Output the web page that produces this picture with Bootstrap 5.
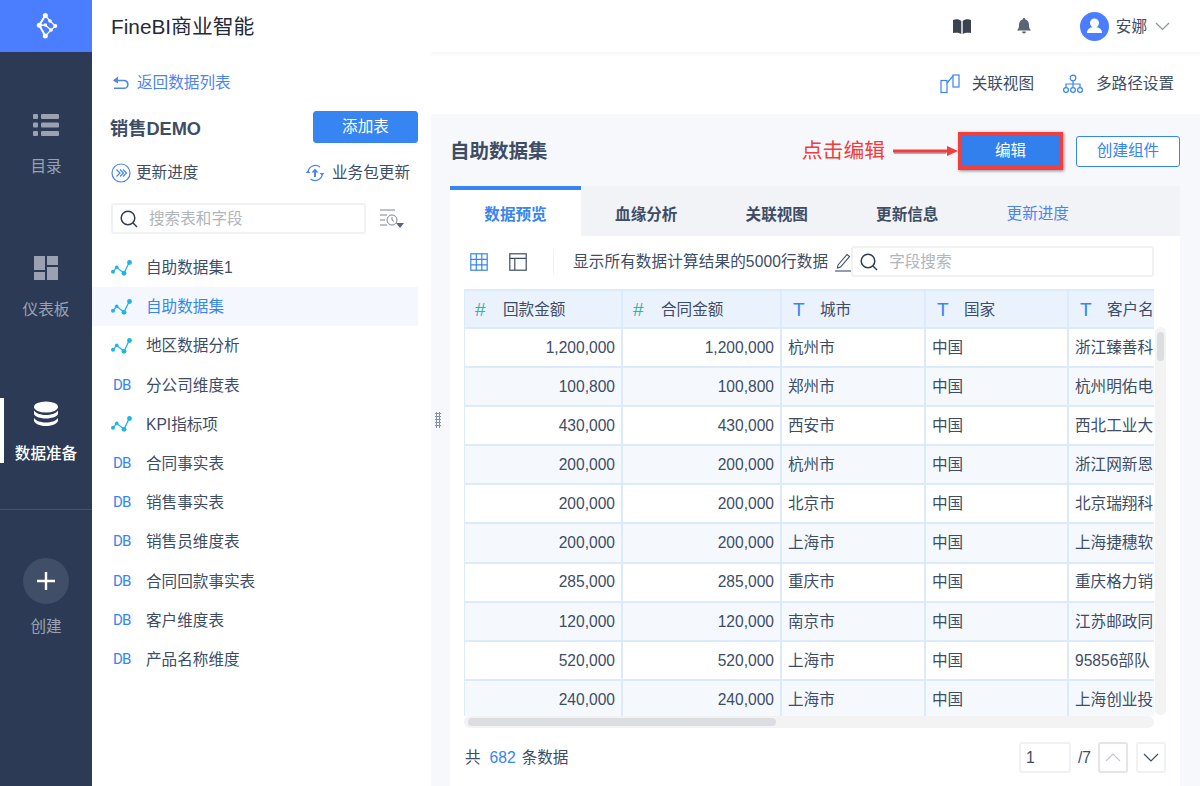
<!DOCTYPE html>
<html lang="zh-CN">
<head>
<meta charset="utf-8">
<title>FineBI</title>
<link href="https://cdn.jsdelivr.net/npm/bootstrap@5.3.0/dist/css/bootstrap.min.css" rel="stylesheet">
<style>
html,body{height:786px;overflow:hidden}
body{font-family:"Liberation Sans","Noto Sans CJK SC",sans-serif;font-size:15.6px;color:#3d4d66;background:#fff}
.shell{width:1200px;height:786px}
.rail{width:92px;background:#2c3a55;color:#9aa2b1;flex:none}
.rail-logo{height:52px;background:#4a7dff}
.rail-item{height:143px;padding-top:61px;font-size:15.6px;line-height:22px;position:relative;text-align:center}
.rail-item svg{display:block;margin:0 auto 19px}
.rail-on{color:#fff;padding-top:63px;height:171px;font-weight:500}
.rail-on svg{margin-bottom:16px}
.rail-on::before{content:"";position:absolute;left:0;top:60px;width:4px;height:65px;background:#fff}
.rail-line{border-top:1px solid #47536c}
.rail-add{width:46px;height:46px;border-radius:50%;background:#414e68;margin:48px auto 11px}
.topbar{height:52px;background:#fff;padding:0 30px 0 19px;position:relative;z-index:2;color:#3d4d66}
.brand{font-size:20.8px;color:#232b38;padding-top:2px}
.topshadow{box-shadow:inset 0 6px 5px -5px rgba(60,70,90,.08)}
.panel{width:339px;background:#fff;flex:none;padding:0 13px 0 0;position:relative;z-index:3}
.back{color:#4a85f0;margin:20px 0 0 20px;height:22px;line-height:22px}
.pk-row{margin:17px 0 0 18px;height:32px}
.pk-name{font-size:18.2px;font-weight:700;color:#3d4d66;padding-top:6px}
.btn-add{width:105px;height:32px;padding:0;background:#3685f2;border:1px solid #3685f2;color:#fff;border-radius:3px;font-size:15.6px}
.act-row{margin:15px 8px 0 19px;height:30px}
.search-row{margin:15px 0 0 19px;height:31px}
.sbox{border:2px solid #f0f1f4;border-radius:3px;height:31px;background:#fff;color:#b0b4bd}
.sbox svg{margin:0 11px 0 7px}
.sbox-l{width:255px}
.datalist{margin-top:14px;padding:0}
.datalist .list-group-item{border:0;padding:0 0 0 19px;height:39.2px;line-height:39px;color:#3d4d66;background:transparent;font-size:15.6px;display:flex;align-items:center;border-radius:0}
.datalist .list-group-item.active{background:#f4f8fe;color:#3685f2;margin:0}
.li-ic{width:35px;flex:none;display:flex}
.db{font-size:15px;font-weight:400;letter-spacing:-.8px;color:#3685f2;font-family:Roboto,sans-serif;width:35px;flex:none;padding-left:2px}
.right{background:#fff;min-width:0}
.subbar{height:62px;padding:2px 26px 0 0;color:#3d4d66;background:#fff}
.content{background:#f7f8fb;padding:0 20px 0 19px;position:relative}
.handle{position:absolute;left:4px;top:298px;width:6px;height:16px;background-image:radial-gradient(#8a93a3 1px,transparent 1.2px);background-size:3px 3px}
.headrow{height:72px;padding-top:2px}
.h-title{font-size:19.5px;font-weight:700;color:#3d4d66;padding-top:2px}
.note{color:#f23b3b;font-size:20.8px;line-height:24px;text-shadow:0 0 2px #fff}
.btn-edit{width:105px;height:38px;background:#3280ee;color:#fff;border:4px solid #f23e3e;border-radius:0;padding:0;font-size:15.6px;box-shadow:1px 1px 3px rgba(0,0,0,.45)}
.btn-make{width:104px;height:31px;padding:0;border:1px solid #3685f2;color:#3685f2;background:#fff;border-radius:3px;font-size:15.6px;margin-left:13px}
.tabline{background:#f2f3f7;height:50px;display:flex}
.tabline .nav-link{width:130.5px;height:50px;padding:0;line-height:58px;text-align:center;font-weight:700;color:#3d4d66;font-size:15.6px;border:0;border-radius:0;background:transparent}
.tabline .nav-link.active{width:131px;background:#fff;color:#3685f2;border-top:4px solid #3685f2;line-height:50px}
.tabline .nav-link.plain{font-weight:400;color:#4a85f0;line-height:55px}
.tabbody{background:#fff;height:550px;padding:10px 14px 0}
.tools{height:31px;padding-left:6px}
.tool-txt{letter-spacing:.12px}
.divi{width:1px;height:26px;background:#f0f1f4;margin:0 19px 0 26px}
.sbox-r{width:303px;flex:none;margin-left:-1px}
.grid-wrap{margin-top:12px}
.tb-clip{width:690px;height:427px;overflow:hidden;flex:none}
.vbar{width:12px;height:388px;margin:38px 0 0 1px;background:#f3f3f4;border-radius:6px;padding:5px 2px 0}
.vbar i{display:block;height:29px;background:#dcdde1;border-radius:4px}
.hbar{width:690px;height:12px;background:#f3f3f4;border-radius:6px;padding:2px 4px}
.hbar i{display:block;height:8px;background:#dcdde1;border-radius:4px;width:308px}
table.dtable{table-layout:fixed;width:760px;margin:0 0 0 -1px;border-collapse:collapse;color:#3d4d66;font-size:15.6px}
.dtable th,.dtable td{height:39.1px;padding:0 6px;border:2px solid #dceafd;white-space:nowrap;overflow:hidden;font-weight:400;vertical-align:middle;background:#fff;color:#3d4d66;box-shadow:none}
.dtable thead th{height:38px;background:#eaf2fe;padding:2px 0 0 10px;border-top:2px solid #dceafd}
.dtable tr.alt td{background:#f5f9fe}
.c-a{width:158px}.c-b{width:159px}.c-c{width:144px}.c-d{width:143px}.c-e{width:156px}
.ty{display:inline-block;font-size:19px;line-height:20px;vertical-align:-1px}
.ty-n{color:#2fb5a0;width:28px}
.ty-t{color:#3685f2;width:27px;margin-left:1px}
.pager{height:58px;padding:1px 0 0 1px}
.pg-in{width:52px;height:31px;border:2px solid #f0f1f4;border-radius:3px;padding-left:5px;line-height:27px;color:#3d4d66}
.pg-b{width:30px;height:31px;border:2px solid #f0f1f4;border-radius:3px;display:flex;align-items:center;justify-content:center}
.pg-u{border-color:#e3e5ea}
.num{color:#3685f2}
</style>
</head>
<body>
<div class="shell d-flex">
  <nav class="rail d-flex flex-column">
    <div class="rail-logo d-flex align-items-center justify-content-center">
      <svg width="26" height="26" viewBox="0 0 26 26" fill="none" stroke="#fff" stroke-width="2"><path d="M12.300 2.300 6.300 12.300l6 10.700"/><path d="M12.300 2.300 17 8l5.300 5-4.300 4-5.700-5-6 .3M12.300 23 18 17" stroke-width="1.300"/><g fill="#fff" stroke="none"><circle cx="12.300" cy="2.600" r="2.500"/><circle cx="6.300" cy="12.300" r="2.500"/><circle cx="12.300" cy="23" r="2.500"/><circle cx="17" cy="8" r="1.800"/><circle cx="22.300" cy="13" r="2"/><circle cx="12.300" cy="12" r="1.800"/><circle cx="18" cy="17" r="1.800"/></g></svg>
    </div>
    <div class="rail-item">
      <svg width="26" height="24" viewBox="0 0 26 24" fill="#9aa2b1"><rect x="0" y="1" width="5" height="5" rx="1"/><rect x="8" y="1" width="18" height="5" rx="1"/><rect x="0" y="9.500" width="5" height="5" rx="1"/><rect x="8" y="9.500" width="18" height="5" rx="1"/><rect x="0" y="18" width="5" height="5" rx="1"/><rect x="8" y="18" width="18" height="5" rx="1"/></svg>
      目录
    </div>
    <div class="rail-item">
      <svg width="26" height="24" viewBox="0 0 26 24" fill="#9aa2b1"><rect x="1" y="0" width="11" height="14"/><rect x="14" y="0" width="11" height="9"/><rect x="1" y="16" width="11" height="8"/><rect x="14" y="11" width="11" height="13"/></svg>
      仪表板
    </div>
    <div class="rail-item rail-on">
      <svg width="26" height="26" viewBox="0 0 26 26" fill="#fff"><ellipse cx="13" cy="6" rx="12" ry="5.500"/><path d="M1 9.500c2 3 7 4.500 12 4.500s10-1.500 12-4.500v3.500c-1 3-7 4.500-12 4.500S2 16 1 13z"/><path d="M1 17c2 3 7 4.500 12 4.500S23 20 25 17v3c-1 3-7 5-12 5S2 23 1 20z"/></svg>
      数据准备
    </div>
    <div class="rail-line"></div>
    <div class="rail-add d-flex align-items-center justify-content-center">
      <svg width="20" height="20" viewBox="0 0 20 20" stroke="#fff" stroke-width="2.400"><path d="M10 1v18M1 10h18"/></svg>
    </div>
    <div class="text-center">创建</div>
  </nav>
  <div class="flex-grow-1 d-flex flex-column" style="min-width:0">
    <header class="topbar d-flex align-items-center">
      <div class="brand">FineBI商业智能</div>
      <div class="ms-auto d-flex align-items-center">
        <svg width="18" height="15" viewBox="0 0 18 15" fill="#3b4250"><path d="M0 1c3-1 6-1 8.300 1v13C6 13.500 3 13.500 0 14zM18 1c-3-1-6-1-8.300 1v13c2.300-1.500 5.300-1.500 8.300-1z"/></svg>
        <svg style="margin-left:46px" width="14" height="16" viewBox="0 0 14 16" fill="#5a6474"><path d="M7 0c1 0 1.300.7 1.300 1.400C11 2.200 12 4.500 12 7c0 2.500.6 4 2 5.500H0C1.400 11 2 9.500 2 7c0-2.500 1-4.800 3.700-5.600C5.700.7 6 0 7 0zM5 13.500h4a2 2 0 0 1-4 0z"/></svg>
        <svg style="margin-left:49px" width="29" height="29" viewBox="0 0 29 29"><circle cx="14.500" cy="14.500" r="14.500" fill="#4a7dff"/><circle cx="14.500" cy="11" r="4.500" fill="#fff"/><path d="M7 21c0-4 3-6 7.500-6S22 17 22 21z" fill="#fff"/></svg>
        <span style="margin-left:7px;padding-top:2px">安娜</span>
        <svg style="margin-left:8px" width="15" height="9" viewBox="0 0 15 9" fill="none" stroke="#8a93a3" stroke-width="1.200"><path d="M1 1l6.500 6.500L14 1"/></svg>
      </div>
    </header>
    <div class="d-flex flex-grow-1" style="min-height:0">
      <aside class="panel">
        <div class="back d-flex align-items-center gap-2">
          <svg width="17" height="14" viewBox="0 0 17 14" fill="none" stroke="#4a85f0" stroke-width="1.600"><path d="M2 4.500h10a3.800 3.800 0 0 1 0 7.800H2"/><path d="M6 0.500 1 4.500l5 3" fill="#4a85f0" stroke="none"/></svg>
          <span>返回数据列表</span>
        </div>
        <div class="pk-row d-flex align-items-center justify-content-between">
          <div class="pk-name">销售DEMO</div>
          <button class="btn btn-add">添加表</button>
        </div>
        <div class="act-row d-flex align-items-center justify-content-between">
          <div class="d-flex align-items-center"><svg width="20" height="20" viewBox="0 0 20 20" fill="none" stroke="#4a85f0" stroke-width="1.200"><circle cx="10" cy="10" r="9"/><path d="M5.500 6.500 9 10l-3.500 3.500M9 6.500 12.500 10 9 13.500M12 6.500 15.500 10 12 13.500"/></svg><span style="margin-left:5px">更新进度</span></div>
          <div class="d-flex align-items-center"><svg width="20" height="20" viewBox="0 0 20 20" fill="none" stroke="#4a85f0" stroke-width="1.300"><path d="M3 10a7.500 7.500 0 0 1 12-6M17.500 10A7.500 7.500 0 0 1 5.500 16"/><path d="M0.500 10 3 7.500 5.500 10zM14.500 10l2.500 2.500 2.500-2.500z" fill="#4a85f0" stroke="none"/><path d="M10 5.500l-3.500 4H9V14h2V9.500h2.500z" fill="#4a85f0" stroke="none"/></svg><span style="margin-left:7px">业务包更新</span></div>
        </div>
        <div class="search-row d-flex align-items-center">
          <div class="sbox sbox-l d-flex align-items-center">
            <svg width="18" height="18" viewBox="0 0 18 18" fill="none" stroke="#2f3b4f" stroke-width="1.500"><circle cx="8" cy="8" r="6.800"/><path d="M13 13l4 4"/></svg>
            <span>搜索表和字段</span>
          </div>
          <svg style="margin-left:13px" width="26" height="24" viewBox="0 0 26 24" fill="none" stroke="#7d8594" stroke-width="1"><path d="M1 3h15M1 8h7M1 13h5M1 18h7"/><circle cx="13" cy="13" r="5"/><path d="M13 10v3l2 1.500"/><path d="M17 16h8l-4 5z" fill="#5a6474" stroke="none"/></svg>
        </div>
        <div class="list-group datalist">
          <div class="list-group-item"><span class="li-ic"><svg width="22" height="16" viewBox="0 0 22 16" fill="none" stroke="#1fb3e8" stroke-width="1.300"><path d="M2 11.700 5.700 7.300l7.300 6 5.300-11"/><g fill="#1fb3e8" stroke="none"><circle cx="2" cy="11.700" r="2"/><circle cx="5.700" cy="7.300" r="1.800"/><circle cx="13" cy="13.300" r="2.400"/><circle cx="18.500" cy="2.500" r="2.400"/></g></svg></span>自助数据集1</div>
          <div class="list-group-item active"><span class="li-ic"><svg width="22" height="16" viewBox="0 0 22 16" fill="none" stroke="#1fb3e8" stroke-width="1.300"><path d="M2 11.700 5.700 7.300l7.300 6 5.300-11"/><g fill="#1fb3e8" stroke="none"><circle cx="2" cy="11.700" r="2"/><circle cx="5.700" cy="7.300" r="1.800"/><circle cx="13" cy="13.300" r="2.400"/><circle cx="18.500" cy="2.500" r="2.400"/></g></svg></span>自助数据集</div>
          <div class="list-group-item"><span class="li-ic"><svg width="22" height="16" viewBox="0 0 22 16" fill="none" stroke="#1fb3e8" stroke-width="1.300"><path d="M2 11.700 5.700 7.300l7.300 6 5.300-11"/><g fill="#1fb3e8" stroke="none"><circle cx="2" cy="11.700" r="2"/><circle cx="5.700" cy="7.300" r="1.800"/><circle cx="13" cy="13.300" r="2.400"/><circle cx="18.500" cy="2.500" r="2.400"/></g></svg></span>地区数据分析</div>
          <div class="list-group-item"><span class="db">DB</span>分公司维度表</div>
          <div class="list-group-item"><span class="li-ic"><svg width="22" height="16" viewBox="0 0 22 16" fill="none" stroke="#1fb3e8" stroke-width="1.300"><path d="M2 11.700 5.700 7.300l7.300 6 5.300-11"/><g fill="#1fb3e8" stroke="none"><circle cx="2" cy="11.700" r="2"/><circle cx="5.700" cy="7.300" r="1.800"/><circle cx="13" cy="13.300" r="2.400"/><circle cx="18.500" cy="2.500" r="2.400"/></g></svg></span>KPI指标项</div>
          <div class="list-group-item"><span class="db">DB</span>合同事实表</div>
          <div class="list-group-item"><span class="db">DB</span>销售事实表</div>
          <div class="list-group-item"><span class="db">DB</span>销售员维度表</div>
          <div class="list-group-item"><span class="db">DB</span>合同回款事实表</div>
          <div class="list-group-item"><span class="db">DB</span>客户维度表</div>
          <div class="list-group-item"><span class="db">DB</span>产品名称维度</div>
        </div>
      </aside>
      <main class="right flex-grow-1 d-flex flex-column">
        <div class="subbar topshadow d-flex align-items-center justify-content-end">
          <svg width="20" height="20" viewBox="0 0 20 20" fill="none" stroke="#3685f2" stroke-width="1.200"><rect x="1" y="6.500" width="6" height="12"/><rect x="13" y="1" width="6" height="12"/><path d="M7 9 13 2"/></svg>
          <span style="margin-left:12px">关联视图</span>
          <svg style="margin-left:29px" width="20" height="20" viewBox="0 0 20 20" fill="none" stroke="#3685f2" stroke-width="1.200"><circle cx="10" cy="4" r="2.800"/><circle cx="3" cy="16" r="2.400"/><circle cx="10" cy="16" r="2.400"/><circle cx="17" cy="16" r="2.400"/><path d="M10 7v6.500M3 13.500V10h14v3.500"/></svg>
          <span style="margin-left:13px">多路径设置</span>
        </div>
        <div class="content flex-grow-1">
          <div class="handle"></div>
          <div class="headrow d-flex align-items-center">
            <div class="h-title">自助数据集</div>
            <div class="ms-auto d-flex align-items-center">
              <span class="note">点击编辑</span>
              <svg style="margin-left:8px" width="65" height="12" viewBox="0 0 65 12"><path d="M1 7.500h52" stroke="rgba(0,0,0,.3)" stroke-width="3"/><path d="M0 4.500h54V1l11 5-11 5V7.500H0z" fill="#f23e3e"/></svg>
              <button class="btn btn-edit">编辑</button>
              <button class="btn btn-make">创建组件</button>
            </div>
          </div>
          <ul class="nav tabline">
            <li class="nav-item"><a class="nav-link active" href="#">数据预览</a></li>
            <li class="nav-item"><a class="nav-link" href="#">血缘分析</a></li>
            <li class="nav-item"><a class="nav-link" href="#">关联视图</a></li>
            <li class="nav-item"><a class="nav-link" href="#">更新信息</a></li>
            <li class="nav-item"><a class="nav-link plain" href="#">更新进度</a></li>
          </ul>
          <div class="tabbody">
            <div class="tools d-flex align-items-center">
              <svg width="18" height="18" viewBox="0 0 18 18" fill="none" stroke="#3685f2" stroke-width="1.200"><rect x=".8" y=".8" width="16.400" height="16.400"/><path d="M.8 6.300h16.400M.8 11.800h16.400M6.300.8v16.400M11.800.8v16.400"/></svg>
              <svg style="margin-left:21px" width="18" height="18" viewBox="0 0 18 18" fill="none" stroke="#3d4d66" stroke-width="1.200"><rect x=".8" y=".8" width="16.400" height="16.400"/><path d="M.8 5.300h16.400M5.800 5.300v11.900"/></svg>
              <div class="divi"></div>
              <span class="text-nowrap tool-txt">显示所有数据计算结果的5000行数据</span>
              <svg style="margin-left:6px" width="18" height="20" viewBox="0 0 18 20" fill="none" stroke="#3d4d66" stroke-width="1.100"><path d="M4 13 13 2.500l2.500 2L6.500 15l-3 1z"/><path d="M1 19h16"/></svg>
              <div class="sbox sbox-r d-flex align-items-center">
                <svg width="18" height="18" viewBox="0 0 18 18" fill="none" stroke="#2f3b4f" stroke-width="1.500"><circle cx="8" cy="8" r="6.800"/><path d="M13 13l4 4"/></svg>
                <span>字段搜索</span>
              </div>
            </div>
            <div class="grid-wrap d-flex">
              <div class="tb-clip">
                <table class="table dtable">
                  <colgroup><col class="c-a"><col class="c-b"><col class="c-c"><col class="c-d"><col class="c-e"></colgroup>
                  <thead><tr><th><span class="ty ty-n">#</span>回款金额</th><th><span class="ty ty-n">#</span>合同金额</th><th><span class="ty ty-t">T</span>城市</th><th><span class="ty ty-t">T</span>国家</th><th><span class="ty ty-t">T</span>客户名</th></tr></thead>
                  <tbody>
                    <tr><td class="text-end">1,200,000</td><td class="text-end">1,200,000</td><td>杭州市</td><td>中国</td><td>浙江臻善科</td></tr>
                    <tr class="alt"><td class="text-end">100,800</td><td class="text-end">100,800</td><td>郑州市</td><td>中国</td><td>杭州明佑电</td></tr>
                    <tr><td class="text-end">430,000</td><td class="text-end">430,000</td><td>西安市</td><td>中国</td><td>西北工业大</td></tr>
                    <tr class="alt"><td class="text-end">200,000</td><td class="text-end">200,000</td><td>杭州市</td><td>中国</td><td>浙江网新恩</td></tr>
                    <tr><td class="text-end">200,000</td><td class="text-end">200,000</td><td>北京市</td><td>中国</td><td>北京瑞翔科</td></tr>
                    <tr class="alt"><td class="text-end">200,000</td><td class="text-end">200,000</td><td>上海市</td><td>中国</td><td>上海捷穗软</td></tr>
                    <tr><td class="text-end">285,000</td><td class="text-end">285,000</td><td>重庆市</td><td>中国</td><td>重庆格力销</td></tr>
                    <tr class="alt"><td class="text-end">120,000</td><td class="text-end">120,000</td><td>南京市</td><td>中国</td><td>江苏邮政同</td></tr>
                    <tr><td class="text-end">520,000</td><td class="text-end">520,000</td><td>上海市</td><td>中国</td><td>95856部队</td></tr>
                    <tr class="alt"><td class="text-end">240,000</td><td class="text-end">240,000</td><td>上海市</td><td>中国</td><td>上海创业投</td></tr>
                  </tbody>
                </table>
              </div>
              <div class="vbar"><i></i></div>
            </div>
            <div class="hbar"><i></i></div>
            <div class="pager d-flex align-items-center">
              <span>共</span><span class="num" style="margin-left:9px">682</span><span style="margin-left:6px">条数据</span>
              <div class="ms-auto d-flex align-items-center">
                <div class="pg-in">1</div>
                <span style="margin:0 7px">/7</span>
                <div class="pg-b pg-u"><svg width="16" height="9" viewBox="0 0 16 9" fill="none" stroke="#c4c8d0" stroke-width="1.200"><path d="M1 8l7-7 7 7"/></svg></div>
                <div class="pg-b" style="margin-left:8px"><svg width="16" height="9" viewBox="0 0 16 9" fill="none" stroke="#3d4d66" stroke-width="1.200"><path d="M1 1l7 7 7-7"/></svg></div>
              </div>
            </div>
          </div>
        </div>
      </main>
    </div>
  </div>
</div>
<script src="https://cdn.jsdelivr.net/npm/bootstrap@5.3.0/dist/js/bootstrap.bundle.min.js"></script>
</body>
</html>
